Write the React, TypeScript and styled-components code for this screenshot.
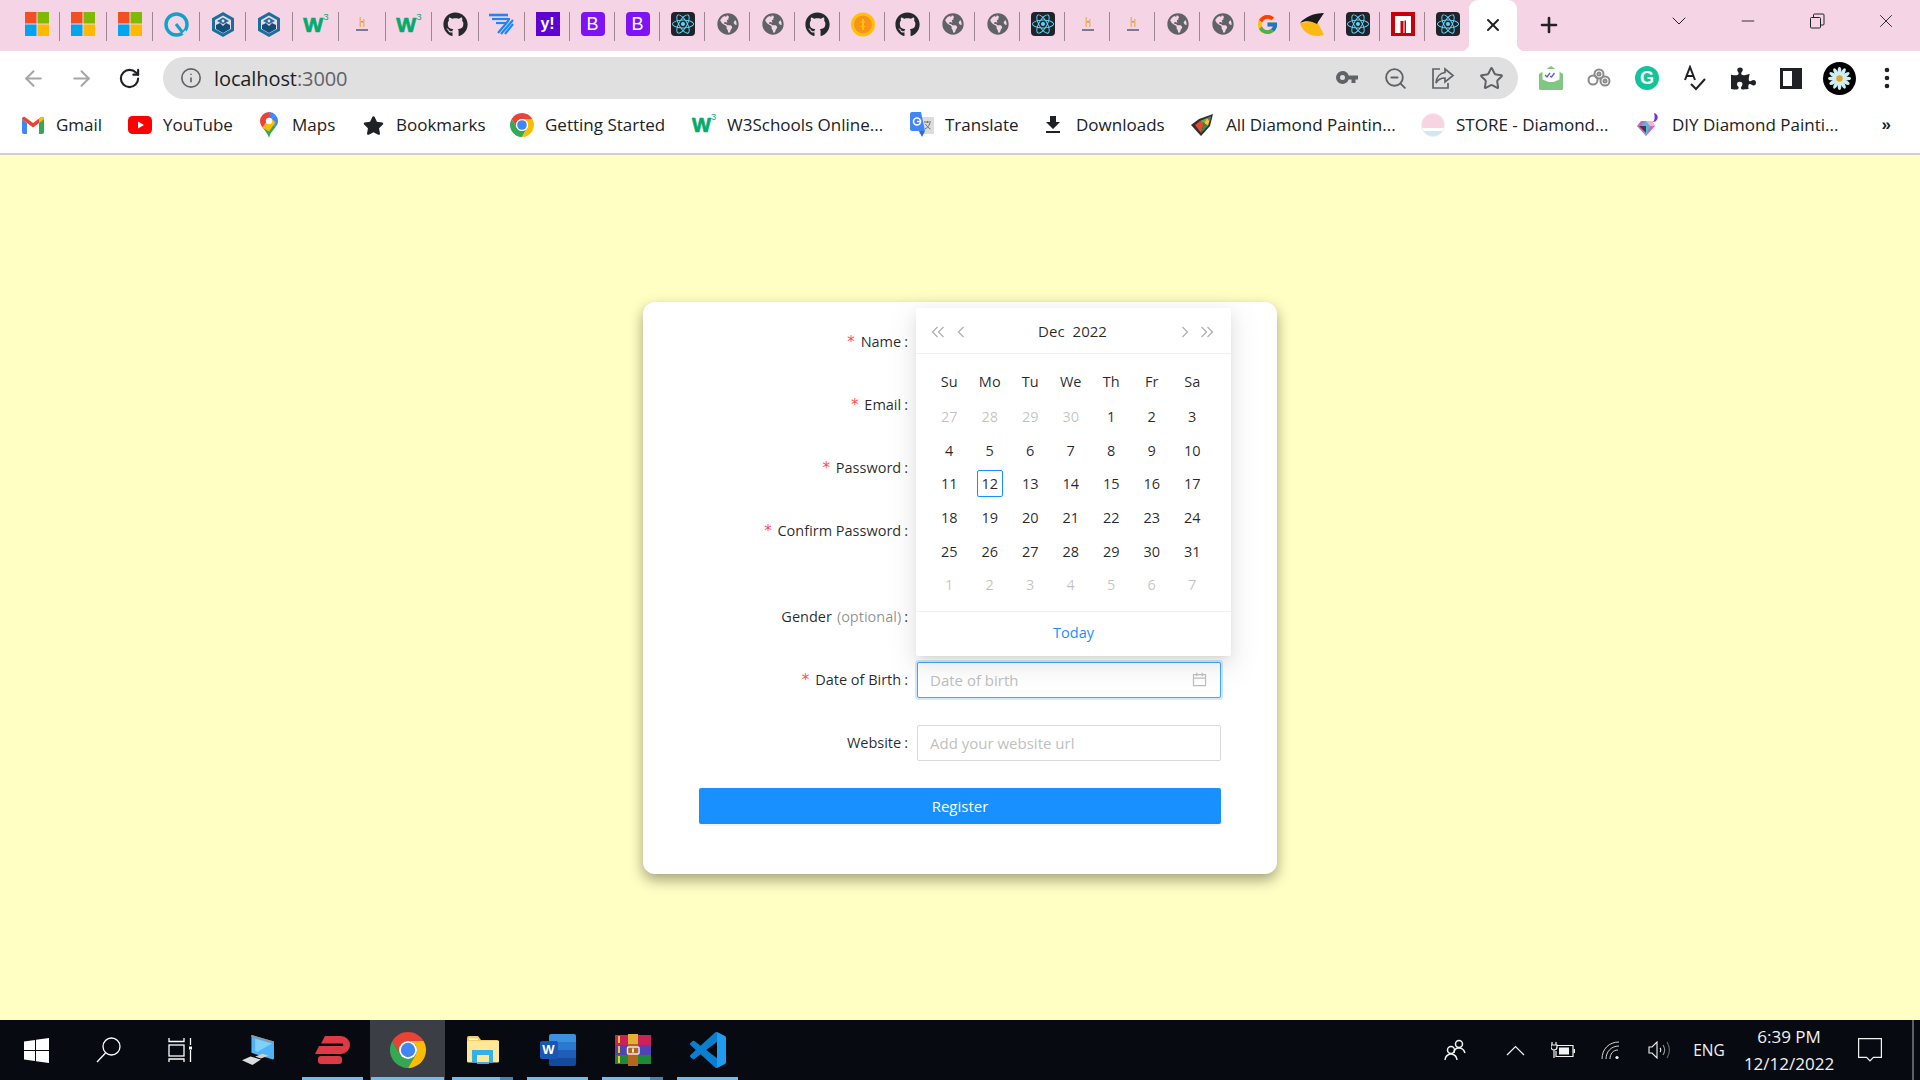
import styled, { createGlobalStyle } from 'styled-components';
import { ArrowLeft, ArrowRight, RotateCw, Info, Plus, X, Minus, ChevronDown, ZoomOut, Star } from 'lucide-react';
import { FaGithub, FaReact, FaGlobeAmericas, FaStar, FaPuzzlePiece } from 'react-icons/fa';
import { FcGoogle } from 'react-icons/fc';
import { AiOutlineCalendar } from 'react-icons/ai';
import { MdFileDownload } from 'react-icons/md';

const UI_FONT = `"Open Sans", "Noto Sans", "Liberation Sans", sans-serif`;

const GlobalStyle = createGlobalStyle`
  html, body { margin: 0; padding: 0; }
  * { box-sizing: border-box; }
  body { font-family: ${UI_FONT}; }
`;

const Screen = styled.div`
  width: 1920px;
  height: 1080px;
  display: flex;
  flex-direction: column;
  overflow: hidden;
  background: #fffec3;
`;

/* ---------- tab strip ---------- */
const TabStrip = styled.div`
  height: 51px;
  flex: none;
  display: flex;
  padding-left: 13.5px;
  background: #f5d5e5;
`;
const Tab = styled.div<{ $wide?: boolean }>`
  width: ${(p) => (p.$wide ? '46.5px' : '45px')};
  height: 51px;
  flex: none;
  display: flex;
  align-items: center;
  justify-content: center;
  position: relative;
  padding-bottom: 3px;
  &::after {
    content: '';
    position: absolute;
    right: 0;
    top: 12px;
    bottom: 10px;
    width: 1px;
    background: #9c8791;
  }
`;
const ActiveTab = styled.div`
  width: 48px;
  height: 51px;
  margin-left: -1px;
  flex: none;
  display: flex;
  align-items: center;
  justify-content: center;
  padding-bottom: 2px;
  position: relative;
  background: #fff;
  border-radius: 9px 9px 0 0;
  color: #222;
  &::before,
  &::after {
    content: '';
    position: absolute;
    bottom: 0;
    width: 8px;
    height: 8px;
  }
  &::before {
    left: -8px;
    background: radial-gradient(circle at 0 0, #f5d5e5 8px, #fff 8.5px);
  }
  &::after {
    right: -8px;
    background: radial-gradient(circle at 100% 0, #f5d5e5 8px, #fff 8.5px);
  }
`;
const NewTab = styled.div`
  width: 48px;
  margin-left: 8px;
  display: flex;
  align-items: center;
  justify-content: center;
  padding-bottom: 1px;
  color: #222;
`;
const WindowControls = styled.div`
  margin-left: auto;
  display: flex;
`;
const WindowButton = styled.div`
  width: 68.75px;
  height: 42px;
  display: flex;
  align-items: center;
  justify-content: center;
  color: #222;
`;
const RestoreIcon = () => (
  <svg width="16" height="16" viewBox="0 0 16 16" fill="none" stroke="#222" strokeWidth="1">
    <rect x="1.5" y="4.5" width="10" height="10.5" rx="1" />
    <path d="M4.5 4.5V2a1 1 0 0 1 1-1h8.5a1 1 0 0 1 1 1v9a1 1 0 0 1-1 1h-2.5" />
  </svg>
);

/* favicons */
const MsIcon = () => (
  <svg width="24" height="24" viewBox="0 0 24 24">
    <rect width="11.5" height="11.5" fill="#f25022" />
    <rect x="12.5" width="11.5" height="11.5" fill="#7fba00" />
    <rect y="12.5" width="11.5" height="11.5" fill="#00a4ef" />
    <rect x="12.5" y="12.5" width="11.5" height="11.5" fill="#ffb900" />
  </svg>
);
const QIcon = () => (
  <svg width="25" height="25" viewBox="0 0 25 25" fill="none">
    <circle cx="12.5" cy="12.5" r="10.5" stroke="#12a1c9" strokeWidth="3.4" />
    <path d="M12 12l7 9" stroke="#12a1c9" strokeWidth="3" />
    <path d="M19 22l3-3" stroke="#f5d5e5" strokeWidth="2" />
  </svg>
);
const HexIcon = () => (
  <svg width="22" height="25" viewBox="0 0 22 25">
    <path d="M11 0l11 6.2v12.6L11 25 0 18.8V6.2z" fill="#1a6f9c" />
    <path d="M11 3.5l8 4.5v9l-8 4.5L3 17V8z" fill="#f5d5e5" />
    <path d="M11 5.5l6 3.4-6 3.4-6-3.4z" fill="#1a6f9c" />
    <path d="M4 13l4-2 3 3 3-3 4 2v4l-7 4-7-4z" fill="#124f78" />
    <circle cx="11" cy="9" r="1.4" fill="#f5d5e5" />
  </svg>
);
const W3Glyph = styled.span<{ $size: number }>`
  font-family: "Liberation Sans", sans-serif;
  font-size: ${(p) => p.$size}px;
  font-weight: 700;
  line-height: 1;
  color: #04aa6d;
  position: relative;
  margin-right: 5px;
  -webkit-text-stroke: 0.7px #04aa6d;
  & > sup {
    position: absolute;
    left: 100%;
    top: -2px;
    font-size: ${(p) => p.$size * 0.46}px;
    font-weight: 400;
    line-height: 1;
    -webkit-text-stroke: 0;
  }
`;
const W3Icon = ({ size = 21 }: { size?: number }) => (
  <W3Glyph $size={size}>W<sup>3</sup></W3Glyph>
);
const TowerIcon = () => (
  <svg width="12" height="15" viewBox="0 0 12 15">
    <rect x="3.5" y="0" width="1.500" height="10" fill="#edb65c" />
    <rect x="7" y="2" width="1.500" height="8" fill="#edb65c" />
    <rect x="5" y="4" width="2" height="1.500" fill="#a893a8" />
    <rect x="0" y="12" width="12" height="2" fill="#77799f" />
  </svg>
);
const WingIcon = () => (
  <svg width="25" height="22" viewBox="0 0 25 22" fill="none" stroke="#1e88f0" strokeWidth="2.2">
    <path d="M0 2h19" strokeWidth="2.6" />
    <path d="M3 6h18" />
    <path d="M7 10h11" />
    <path d="M24 7L12 21" />
    <path d="M20 7L9 20" />
    <path d="M24 11l-8 10" />
  </svg>
);
const SquareGlyph = styled.div<{ $bg: string; $radius: number }>`
  width: 24px;
  height: 24px;
  display: flex;
  align-items: center;
  justify-content: center;
  background: ${(p) => p.$bg};
  border-radius: ${(p) => p.$radius}px;
  color: #fff;
  font-family: "Liberation Sans", sans-serif;
`;
const YahooText = styled.span`
  font-size: 16px;
  font-weight: 700;
`;
const BootText = styled.span`
  font-size: 18px;
  font-weight: 500;
`;
const CoinIcon = () => (
  <svg width="24" height="25" viewBox="0 0 24 25">
    <circle cx="12" cy="12.5" r="12" fill="#ffc107" />
    <circle cx="12" cy="12.5" r="9" fill="#f7931a" />
    <path d="M11 7h2v11h-2z" fill="#ffc107" />
    <path d="M9.5 10h5M9.5 14.5h5" stroke="#ffc107" strokeWidth="1.2" />
  </svg>
);
const BannerIcon = () => (
  <svg width="25" height="25" viewBox="0 0 25 25">
    <path d="M0 11L17 9l7 14c-10 3-21-1-24-12z" fill="#fdb913" />
    <path d="M0 11C5 5 14 1 24 1l-6 9-1 2C12 9 6 8 0 11z" fill="#1b1b1b" />
  </svg>
);
const NIcon = () => (
  <svg width="24" height="24" viewBox="0 0 24 24">
    <rect width="24" height="24" fill="#c8000a" />
    <path d="M4 4h16v17h-5V8.500h-1.500V21H4z" fill="#fff" />
    <rect x="9.500" y="9" width="3" height="12" fill="#c8000a" />
  </svg>
);

const renderFavicon = (kind: string) => {
  switch (kind) {
    case 'ms': return <MsIcon />;
    case 'q': return <QIcon />;
    case 'hex': return <HexIcon />;
    case 'w3': return <W3Icon />;
    case 'tower': return <TowerIcon />;
    case 'github': return <FaGithub size={25} color="#24292e" />;
    case 'wing': return <WingIcon />;
    case 'yahoo': return <SquareGlyph $bg="#5f01d1" $radius={0}><YahooText>y!</YahooText></SquareGlyph>;
    case 'boot': return <SquareGlyph $bg="#7f13f5" $radius={4}><BootText>B</BootText></SquareGlyph>;
    case 'react': return <SquareGlyph $bg="#20232a" $radius={4}><FaReact size={22} color="#61dafb" /></SquareGlyph>;
    case 'globe': return <FaGlobeAmericas size={22} color="#5f6368" />;
    case 'coin': return <CoinIcon />;
    case 'google': return <FcGoogle size={23} />;
    case 'banner': return <BannerIcon />;
    default: return <NIcon />;
  }
};

const TAB_KINDS = [
  'ms', 'ms', 'ms', 'q', 'hex', 'hex', 'w3', 'tower', 'w3', 'github', 'wing', 'yahoo', 'boot', 'boot', 'react', 'globe',
  'globe', 'github', 'coin', 'github', 'globe', 'globe', 'react', 'tower', 'tower', 'globe', 'globe', 'google', 'banner',
  'react', 'n', 'react',
];

/* ---------- toolbar ---------- */
const Toolbar = styled.div`
  height: 48px;
  flex: none;
  display: flex;
  align-items: flex-end;
  padding: 0 9px;
  background: #fff;
`;
const ToolButton = styled.div<{ $color?: string }>`
  width: 48px;
  height: 42px;
  flex: none;
  display: flex;
  align-items: center;
  justify-content: center;
  color: ${(p) => p.$color || '#5f6368'};
`;
const Omnibox = styled.div`
  flex: 1;
  height: 42px;
  margin: 0 9px 0 10px;
  display: flex;
  align-items: center;
  padding: 0 3px 0 17px;
  background: #e0e0e0;
  border-radius: 21px;
`;
const Url = styled.div`
  margin-left: 12px;
  font-size: 20px;
  color: #1f1f1f;
  letter-spacing: -0.1px;
  & > span {
    color: #5f6368;
  }
`;
const OmniSpacer = styled.div`
  flex: 1;
`;
const KeyIcon = () => (
  <svg width="22" height="14" viewBox="0 0 22 14" fill="#5f6368">
    <path d="M6.500 0a6.500 6.500 0 0 1 6.200 4.500H22v4h-2.500V12h-4V8.500h-2.800A6.500 6.500 0 1 1 6.500 0zm0 4a2.500 2.500 0 1 0 0 5 2.500 2.500 0 0 0 0-5z" />
  </svg>
);
const ShareIcon = () => (
  <svg width="24" height="24" viewBox="0 0 24 24" fill="none" stroke="#5f6368" strokeWidth="1.7">
    <path d="M9 3H2v19h15v-5" />
    <path d="M14 3l8 6.500-8 6.500v-4c-4 0-7 1.500-9 5 .5-6 4-10 9-10.500z" />
  </svg>
);
const MailExtIcon = () => (
  <svg width="24" height="24" viewBox="0 0 24 24">
    <path d="M0 8l12-8 12 8v14a2 2 0 0 1-2 2H2a2 2 0 0 1-2-2z" fill="#81c784" />
    <rect x="3.500" y="3" width="17" height="13" fill="#fff" />
    <path d="M6 9l2 2 3-4M11 10l1.500 1 3-4" stroke="#5c5fd6" strokeWidth="1.300" fill="none" />
    <path d="M0 12l12 5 12-5v10a2 2 0 0 1-2 2H2a2 2 0 0 1-2-2z" fill="#81c784" />
  </svg>
);
const RingsIcon = () => (
  <svg width="24" height="20" viewBox="0 0 24 20" fill="none" stroke="#8a8a8a" strokeWidth="2">
    <circle cx="6" cy="12" r="4.500" />
    <circle cx="12" cy="6" r="4.500" />
    <circle cx="18" cy="13" r="4.500" />
    <circle cx="18" cy="13" r="1.500" />
    <circle cx="12" cy="6" r="1.500" />
  </svg>
);
const GrammarlyBadge = styled.div`
  width: 24px;
  height: 24px;
  display: flex;
  align-items: center;
  justify-content: center;
  border-radius: 50%;
  background: #15c39a;
  color: #fff;
  font-family: "Liberation Sans", sans-serif;
  font-size: 18px;
  font-weight: 700;
`;
const SpellIcon = () => (
  <svg width="24" height="26" viewBox="0 0 24 26" fill="none" stroke="#202124" strokeWidth="2">
    <path d="M2 15L7 2l5 13M4 11h6" />
    <path d="M8 19l5 5 9-10" />
  </svg>
);
const SidePanelIcon = () => (
  <svg width="22" height="21" viewBox="0 0 22 21">
    <path d="M0 0h22v21H0zM3 3v15h9V3z" fill="#202124" fillRule="evenodd" />
  </svg>
);
const AvatarIcon = () => (
  <svg width="33" height="33" viewBox="0 0 33 33">
    <circle cx="16.500" cy="16.500" r="16.500" fill="#000" />
    {[0, 30, 60, 90, 120, 150, 180, 210, 240, 270, 300, 330].map((a) => (
      <ellipse key={a} cx="16.500" cy="10" rx="1.900" ry="5" fill="#cfeef0" transform={`rotate(${a} 16.500 16.500)`} />
    ))}
    <circle cx="16.500" cy="16.500" r="3.200" fill="#f0a020" />
  </svg>
);
const DotsIcon = () => (
  <svg width="6" height="22" viewBox="0 0 6 22" fill="#202124">
    <circle cx="3" cy="3" r="2.300" />
    <circle cx="3" cy="11" r="2.300" />
    <circle cx="3" cy="19" r="2.300" />
  </svg>
);

/* ---------- bookmarks ---------- */
const BookmarkBar = styled.div`
  height: 56px;
  flex: none;
  display: flex;
  align-items: center;
  padding: 0 0 2px 21px;
  background: #fff;
  border-bottom: 2px solid #cfcfcf;
`;
const Bookmark = styled.div<{ $w: number; $gap: number }>`
  flex: none;
  display: flex;
  align-items: center;
  width: ${(p) => p.$w}px;
  margin-right: ${(p) => p.$gap}px;
`;
const BookmarkIconBox = styled.div`
  width: 24px;
  height: 26px;
  flex: none;
  display: flex;
  align-items: center;
  justify-content: center;
`;
const BookmarkLabel = styled.span`
  margin-left: 11px;
  font-size: 17px;
  line-height: 20px;
  color: #202124;
  white-space: nowrap;
`;
const MoreMarks = styled.div`
  margin-left: auto;
  width: 68px;
  padding-right: 29px;
  text-align: right;
  font-family: "Liberation Sans", sans-serif;
  font-weight: 700;
  font-size: 17px;
  color: #202124;
`;
const GmailIcon = () => (
  <svg width="22" height="18" viewBox="0 0 22 18">
    <path d="M0 3v13a2 2 0 0 0 2 2h3V7z" fill="#4285f4" />
    <path d="M22 3v13a2 2 0 0 1-2 2h-3V7z" fill="#34a853" />
    <path d="M0 3l5 4 6 4.500L17 7l5-4a2 2 0 0 0-3.500-1.500L11 7 3.500 1.500A2 2 0 0 0 0 3z" fill="#ea4335" />
    <path d="M17 7l5-4a2 2 0 0 0-3.500-1.500L17 3z" fill="#fbbc04" />
  </svg>
);
const YoutubeIcon = () => (
  <svg width="24" height="18" viewBox="0 0 24 18">
    <rect width="24" height="18" rx="4.500" fill="#f00" />
    <path d="M10 5.500l6 3.500-6 3.500z" fill="#fff" />
  </svg>
);
const MapsIcon = () => (
  <svg width="18" height="26" viewBox="0 0 18 26">
    <path d="M9 0a9 9 0 0 0-9 9c0 3 1.500 5 2.500 6.500L9 7z" fill="#ea4335" />
    <path d="M9 0c2.500 0 5 1 6.500 3L9 9z" fill="#4285f4" />
    <path d="M15.500 3A9 9 0 0 1 18 9c0 2.500-1 4-2 5.500L9 9z" fill="#4285f4" />
    <path d="M2.500 15.500L9 9l7 5.500c-2 3-5.500 5.500-7 11.500-1-4-4-7.500-6.500-10.500z" fill="#34a853" />
    <path d="M2.500 15.500L11.500 6.500l4 4-6.500 9z" fill="#fbbc04" />
    <circle cx="9" cy="9" r="3.200" fill="#fff" />
  </svg>
);
const ChromeIcon = ({ size }: { size: number }) => (
  <svg width={size} height={size} viewBox="4 4 40 40">
    <path d="M6.680 14A20 20 0 0 1 41.320 14H24A10 10 0 0 0 15.340 29z" fill="#ea4335" />
    <path d="M6.680 14A20 20 0 0 0 24 44l8.660-15A10 10 0 0 1 15.340 29z" fill="#34a853" />
    <path d="M24 44A20 20 0 0 0 41.320 14H24A10 10 0 0 1 32.660 29z" fill="#fbbc04" />
    <circle cx="24" cy="24" r="10" fill="#fff" />
    <circle cx="24" cy="24" r="8" fill="#4285f4" />
  </svg>
);
const TranslateIcon = () => (
  <svg width="24" height="26" viewBox="0 0 24 26">
    <rect x="9" y="5" width="15" height="17" rx="1" fill="#dcdcdc" />
    <path d="M14 10h7M17.500 9v2M20 11c-1 3-3 5-5 6M15.500 12c1 2 3 4 5 5" stroke="#6d6d6d" strokeWidth="1" fill="none" />
    <path d="M2 0h9l4 19H2a2 2 0 0 1-2-2V2a2 2 0 0 1 2-2z" fill="#4285f4" />
    <path d="M9 19l3 6 3-6z" fill="#3367d6" />
    <circle cx="7" cy="9.500" r="3.500" fill="none" stroke="#fff" strokeWidth="1.600" />
    <path d="M7 9.500h3.500" stroke="#fff" strokeWidth="1.400" />
  </svg>
);
const GemIcon = () => (
  <svg width="24" height="24" viewBox="0 0 24 24">
    <path d="M0 12L8 6l14-5-3 12-9 10z" fill="#2e2e2e" />
    <path d="M4 12l5-4 4 2-3 10z" fill="#e04a32" />
    <path d="M9 8l7-3-3 5z" fill="#5cb746" />
    <path d="M13 10l3-5 3 1-2 7z" fill="#f2c530" />
    <path d="M10 20l3-10 4 3z" fill="#2f8f4a" />
    <path d="M16 5l4-2-1 6z" fill="#6f6f6f" />
  </svg>
);
const StoreBadge = styled.div`
  width: 24px;
  height: 24px;
  border-radius: 50%;
  background: linear-gradient(#f8d3e2 0 62%, #fff 62% 78%, #cfe6f5 78%);
  border: 1px solid #eee;
`;
const DiyIcon = () => (
  <svg width="24" height="24" viewBox="0 0 24 24">
    <path d="M0 13l4-5h11l3 5-9 10z" fill="#c26bbe" />
    <path d="M4 13l5-5 4 5-4 10z" fill="#56b9d6" />
    <path d="M13 13l-4-5h6l3 5z" fill="#f2b8c6" />
    <path d="M2 13h7v7z" fill="#4a3550" />
    <path d="M17 0c4 1 5 5 2 8-1 .8-2 1-3 1 2-2 2-6 1-9z" fill="#6a35c9" />
  </svg>
);

/* ---------- register form ---------- */
const Page = styled.main`
  flex: 1;
  min-height: 0;
  display: flex;
  align-items: center;
  justify-content: center;
  background: #fffec3;
`;
const Card = styled.form`
  width: 634px;
  height: 572px;
  position: relative;
  padding: 22px 56px 0;
  background: #fff;
  border-radius: 12px;
  box-shadow: 0 6px 14px rgba(0, 0, 0, 0.36);
  font-size: 14.5px;
  color: rgba(0, 0, 0, 0.85);
`;
const FormRow = styled.div<{ $extra?: boolean }>`
  display: flex;
  height: 36px;
  margin-bottom: ${(p) => (p.$extra ? '50px' : '27px')};
`;
const Label = styled.label`
  width: 218px;
  flex: none;
  display: flex;
  align-items: center;
  justify-content: flex-end;
  padding-right: 9px;
  white-space: nowrap;
  &::after {
    content: ':';
    margin-left: 3px;
  }
`;
const Required = styled.span`
  margin-right: 5px;
  color: #ff4d4f;
  font-family: "DejaVu Sans Mono", monospace;
  font-size: 15px;
`;
const Muted = styled.span`
  margin-left: 5px;
  color: rgba(0, 0, 0, 0.45);
`;
const InputBox = styled.div<{ $focused?: boolean }>`
  width: 304px;
  height: 36px;
  display: flex;
  align-items: center;
  padding: 0 12px;
  background: #fff;
  border: 1px solid ${(p) => (p.$focused ? '#40a9ff' : '#d9d9d9')};
  border-radius: 2px;
  box-shadow: ${(p) => (p.$focused ? '0 0 0 2px rgba(24, 144, 255, 0.2)' : 'none')};
`;
const TextField = styled.input`
  flex: 1;
  min-width: 0;
  border: none;
  outline: none;
  padding: 0;
  background: transparent;
  font-family: inherit;
  font-size: 15px;
  color: inherit;
  &::placeholder {
    color: #bfbfbf;
    opacity: 1;
  }
`;
const SubmitButton = styled.button`
  width: 522px;
  height: 36px;
  display: block;
  padding: 0;
  border: none;
  border-radius: 2px;
  background: #1890ff;
  box-shadow: 0 2px 0 rgba(0, 0, 0, 0.045);
  color: #fff;
  font-family: inherit;
  font-size: 15px;
`;

/* date picker popup lies over the form */
const Picker = styled.div`
  position: absolute;
  left: 273px;
  top: 6px;
  width: 315px;
  height: 348px;
  display: flex;
  flex-direction: column;
  background: #fff;
  border-radius: 2px;
  box-shadow: 0 3px 6px -4px rgba(0, 0, 0, 0.12), 0 6px 16px 0 rgba(0, 0, 0, 0.08), 0 9px 28px 8px rgba(0, 0, 0, 0.05);
`;
const PickerHeader = styled.div`
  height: 46px;
  flex: none;
  display: flex;
  align-items: center;
  padding: 4px 12px 0 10px;
  border-bottom: 1px solid #f0f0f0;
`;
const NavButton = styled.div<{ $w: number }>`
  width: ${(p) => p.$w}px;
  display: flex;
  justify-content: center;
  color: #b0b0b0;
`;
const MonthTitle = styled.div`
  flex: 1;
  display: flex;
  justify-content: center;
  gap: 8px;
  margin-top: -3px;
  font-size: 15px;
  font-weight: 500;
`;
const PickerBody = styled.div`
  flex: 1;
  padding: 10px 0 0 13px;
`;
const DayGrid = styled.div`
  display: grid;
  grid-template-columns: repeat(7, 40.5px);
  grid-template-rows: 36px repeat(6, 33.7px);
`;
const WeekDay = styled.div`
  display: flex;
  align-items: center;
  justify-content: center;
  font-size: 14.5px;
`;
const DayCell = styled.div<{ $muted?: boolean }>`
  display: flex;
  align-items: center;
  justify-content: center;
  font-size: 14.5px;
  color: ${(p) => (p.$muted ? 'rgba(0, 0, 0, 0.25)' : 'rgba(0, 0, 0, 0.85)')};
`;
const TodayMark = styled.div`
  width: 26px;
  height: 27px;
  display: flex;
  align-items: center;
  justify-content: center;
  border: 1px solid #1890ff;
  border-radius: 2px;
`;
const PickerFooter = styled.div`
  height: 45px;
  flex: none;
  display: flex;
  align-items: center;
  justify-content: center;
  padding-bottom: 2px;
  border-top: 1px solid #f0f0f0;
  color: #1890ff;
  font-size: 14.5px;
`;
const Chevron = ({ double, right }: { double?: boolean; right?: boolean }) => {
  const w = double ? 14 : 9;
  return (
    <svg width={w} height="12" viewBox={`0 0 ${w} 12`} fill="none" stroke="currentColor" strokeWidth="1.300">
      <g transform={right ? `translate(${w} 0) scale(-1 1)` : undefined}>
        <path d="M6.500 1L1.500 6l5 5" />
        {double && <path d="M12.500 1L7.500 6l5 5" />}
      </g>
    </svg>
  );
};

const WEEK = ['Su', 'Mo', 'Tu', 'We', 'Th', 'Fr', 'Sa'];
const LEADING = [27, 28, 29, 30];
const TRAILING = [1, 2, 3, 4, 5, 6, 7];
const DAYS = Array.from({ length: 31 }, (_, i) => i + 1);

/* ---------- taskbar ---------- */
const Taskbar = styled.footer`
  height: 60px;
  flex: none;
  display: flex;
  align-items: stretch;
  background: #070b11;
  color: #f2f2f2;
`;
const SystemButton = styled.div<{ $pinned?: boolean }>`
  width: ${(p) => (p.$pinned ? '75px' : '72px')};
  margin-left: ${(p) => (p.$pinned ? '4px' : '0')};
  display: flex;
  align-items: center;
  justify-content: center;
`;
const AppButton = styled.div<{ $active?: boolean; $stacked?: boolean }>`
  width: 75px;
  display: flex;
  align-items: center;
  justify-content: center;
  position: relative;
  padding-bottom: 1px;
  background: ${(p) => (p.$active ? '#3b3e44' : 'transparent')};
  &::after {
    content: '';
    position: absolute;
    left: ${(p) => (p.$active ? '1px' : '7px')};
    right: ${(p) => (p.$active ? '1px' : '7px')};
    bottom: 0;
    height: 3px;
    background: ${(p) => (p.$stacked
      ? 'linear-gradient(to right, #76b9ed 0 48px, #4a83ad 48px)'
      : '#76b9ed')};
  }
`;
const Tray = styled.div`
  margin-left: auto;
  display: flex;
  align-items: center;
`;
const TrayItem = styled.div<{ $w: number; $gap?: number }>`
  width: ${(p) => p.$w}px;
  margin-right: ${(p) => p.$gap || 0}px;
  display: flex;
  align-items: center;
  justify-content: center;
`;
const LangText = styled.span`
  font-size: 15.5px;
`;
const Clock = styled.div`
  width: 108px;
  display: flex;
  flex-direction: column;
  align-items: center;
  gap: 5px;
  font-size: 17px;
  line-height: 22px;
  white-space: nowrap;
`;
const DesktopEdge = styled.div`
  width: 2px;
  height: 60px;
  margin: 0 6px 0 15px;
  background: #5b5e63;
`;
const WindowsLogo = () => (
  <svg width="25" height="25" viewBox="0 0 25 25" fill="#fff">
    <path d="M0 3.500L11 2v10H0zM12 1.800L25 0v12H12zM0 13h11v10L0 21.500zM12 13h13v12l-13-1.800z" />
  </svg>
);
const SearchIcon = () => (
  <svg width="25" height="26" viewBox="0 0 25 26" fill="none" stroke="#fff" strokeWidth="1.300">
    <circle cx="15.500" cy="9.500" r="8.500" />
    <path d="M9.500 16L1 25" />
  </svg>
);
const TaskViewIcon = () => (
  <svg width="24" height="24" viewBox="0 0 24 24" fill="none" stroke="#fff" strokeWidth="1.300">
    <path d="M1 0v3.500h15V0" />
    <rect x="1" y="7" width="15" height="11" />
    <path d="M1 24v-3h15v3" />
    <path d="M22.500 0v7M22.500 12v12" />
    <rect x="21" y="8.500" width="3" height="3" fill="#fff" stroke="none" />
  </svg>
);
const ComputerIcon = () => (
  <svg width="32" height="31" viewBox="0 0 34 33">
    <path d="M10 0l24 7v18l-1 1L10 19z" fill="#4fb3f5" />
    <path d="M10 0l24 7v2L10 2z" fill="#8a9aa5" />
    <path d="M14 4l18 5-16 9-2-1z" fill="#7fd0fa" />
    <path d="M14 23l8-3 6 2-8 3z" fill="#d0d0d0" />
    <path d="M0 27l9-4 11 3-9 6z" fill="#dcdcdc" />
  </svg>
);
const ExpressIcon = () => (
  <svg width="36" height="28" viewBox="0 0 36 28" fill="#dc3a44">
    <path d="M10 0h16a9 9 0 0 1 9 9 9 9 0 0 1-9 9H0l4-8h23a1.200 1.200 0 0 0 0-2.500H6z" />
    <rect x="3" y="20" width="24" height="8" rx="3" />
  </svg>
);
const ExplorerIcon = () => (
  <svg width="32" height="28" viewBox="0 0 32 28">
    <path d="M0 2a2 2 0 0 1 2-2h9l3 4h16a2 2 0 0 1 2 2v18a2 2 0 0 1-2 2H2a2 2 0 0 1-2-2z" fill="#f3cf6c" />
    <path d="M0 5h32v20a1.500 1.500 0 0 1-1.500 1.500h-29A1.500 1.500 0 0 1 0 25z" fill="#ffe79a" />
    <rect x="2" y="2.500" width="9" height="1.500" fill="#fff" />
    <path d="M5 26.500V14h21v12.500h-4V19H10v7.500z" fill="#31b0ec" />
    <rect x="10" y="26" width="12" height="2" fill="#31b0ec" />
  </svg>
);
const WordBase = styled.div`
  width: 36px;
  height: 32px;
  position: relative;
`;
const WordPages = styled.div`
  position: absolute;
  right: 0;
  top: 0;
  width: 27px;
  height: 32px;
  border-radius: 2px;
  background: linear-gradient(#3d8fe0 0 25%, #2a78d0 25% 50%, #1c5eb8 50% 75%, #144a9c 75%);
`;
const WordBadge = styled.div`
  position: absolute;
  left: 0;
  top: 7px;
  width: 18px;
  height: 18px;
  display: flex;
  align-items: center;
  justify-content: center;
  border-radius: 2px;
  background: #1a56b5;
  color: #fff;
  font-family: "Liberation Sans", sans-serif;
  font-size: 13px;
  font-weight: 700;
`;
const RarIcon = () => (
  <svg width="36" height="32" viewBox="0 0 36 32">
    <rect y="1" width="36" height="10" fill="#c9235a" />
    <rect y="11" width="36" height="10" fill="#5044b4" />
    <rect y="21" width="36" height="9" fill="#1d8a3a" />
    <rect x="3" y="2" width="2" height="7" fill="#f7c52e" />
    <rect x="3" y="12" width="2" height="7" fill="#f7c52e" />
    <rect x="3" y="22" width="2" height="7" fill="#f7c52e" />
    <rect x="13" y="0" width="10" height="10" fill="#e5b030" />
    <rect x="13" y="10" width="10" height="22" fill="#b4661e" />
    <rect x="12.500" y="13" width="11.500" height="7" rx="1" fill="none" stroke="#e8e8e8" strokeWidth="1.500" />
    <rect x="17" y="14.500" width="2" height="4" fill="#e8e8e8" />
  </svg>
);
const VscodeIcon = () => (
  <svg width="36" height="36" viewBox="0 0 24 24">
    <path fill="#0a7fd0" d="M23.150 2.587L18.210.21a1.494 1.494 0 0 0-1.705.29l-9.460 8.630-4.120-3.128a.999.999 0 0 0-1.276.057L.327 7.261A1 1 0 0 0 .326 8.740L3.899 12 .326 15.260a1 1 0 0 0 .001 1.479L1.650 17.940a.999.999 0 0 0 1.276.057l4.120-3.128 9.460 8.630a1.492 1.492 0 0 0 1.704.29l4.942-2.377A1.500 1.500 0 0 0 24 20.060V3.939a1.500 1.500 0 0 0-.850-1.352zm-5.146 14.861L10.826 12l7.178-5.448v10.896z" />
    <path fill="#1f9cf0" d="M18.004 0.100a1.500 1.500 0 0 1 .206.110l4.940 2.377A1.500 1.500 0 0 1 24 3.939V20.060a1.500 1.500 0 0 1-.850 1.352l-4.942 2.377a1.500 1.500 0 0 1-.204.080z" />
  </svg>
);
const PeopleIcon = () => (
  <svg width="22" height="22" viewBox="0 0 22 22" fill="none" stroke="#f2f2f2" strokeWidth="1.500">
    <circle cx="15" cy="5" r="3.500" />
    <path d="M10 14c0-3 2-5 5-5s5 2 6 5" />
    <circle cx="7" cy="11" r="3.500" />
    <path d="M1 21c0-3 2.500-6 6-6s6 3 6 6" />
  </svg>
);
const CaretIcon = () => (
  <svg width="19" height="11" viewBox="0 0 19 11" fill="none" stroke="#f2f2f2" strokeWidth="1.200">
    <path d="M1 10l8.500-8.500L18 10" />
  </svg>
);
const BatteryIcon = () => (
  <svg width="24" height="16" viewBox="0 0 24 16" fill="none" stroke="#f2f2f2" strokeWidth="1.200">
    <path d="M6 3.500h16v11H5V9" />
    <rect x="8" y="5.500" width="10" height="7" fill="#f2f2f2" stroke="none" />
    <rect x="22.500" y="7" width="1.500" height="4" fill="#f2f2f2" stroke="none" />
    <path d="M1 0v3M5 0v3M0 3h6v2a3 3 0 0 1-6 0zM3 8v8" />
  </svg>
);
const WifiIcon = () => (
  <svg width="20" height="19" viewBox="0 0 20 19" fill="none" stroke="#d6d6d6" strokeWidth="1">
    <path d="M1 18C1 8 8 1 18 1" />
    <path d="M5 18c0-7 5-13 13-13" />
    <path d="M9 18c0-5 3-9 8-9" />
    <circle cx="16" cy="16.500" r="1.600" fill="#f2f2f2" stroke="none" />
  </svg>
);
const VolumeIcon = () => (
  <svg width="23" height="18" viewBox="0 0 23 18" fill="none" stroke="#f2f2f2" strokeWidth="1.100">
    <path d="M1 6h3l5-5v16l-5-5H1z" />
    <path d="M12 7c1 1 1 3 0 4" />
    <path d="M15 4c2 3 2 7 0 10" stroke="#9a9a9a" />
    <path d="M19 1c3 5 3 11 0 16" stroke="#6a6a6a" />
  </svg>
);
const NotifyIcon = () => (
  <svg width="24" height="24" viewBox="0 0 24 24" fill="none" stroke="#f2f2f2" strokeWidth="1.200">
    <path d="M.6.6h22.800v18.800h-8L12 23l-3.400-3.600H.6z" />
  </svg>
);

const App = () => {
  return (
    <Screen>
      <GlobalStyle />

      <TabStrip>
        {TAB_KINDS.map((kind, i) => (
          <Tab key={i} $wide={i < 11}>{renderFavicon(kind)}</Tab>
        ))}
        <ActiveTab><X size={20} strokeWidth={2.4} /></ActiveTab>
        <NewTab><Plus size={24} strokeWidth={2.6} /></NewTab>
        <WindowControls>
          <WindowButton><ChevronDown size={24} strokeWidth={1} /></WindowButton>
          <WindowButton><Minus size={20} strokeWidth={1.100} /></WindowButton>
          <WindowButton><RestoreIcon /></WindowButton>
          <WindowButton><X size={22} strokeWidth={1} /></WindowButton>
        </WindowControls>
      </TabStrip>

      <Toolbar>
        <ToolButton $color="#a6a6a6"><ArrowLeft size={25} strokeWidth={1.900} /></ToolButton>
        <ToolButton $color="#a6a6a6"><ArrowRight size={25} strokeWidth={1.900} /></ToolButton>
        <ToolButton $color="#202124"><RotateCw size={23} strokeWidth={2.200} /></ToolButton>
        <Omnibox>
          <Info size={22} strokeWidth={1.800} color="#5f6368" />
          <Url>localhost<span>:3000</span></Url>
          <OmniSpacer />
          <ToolButton><KeyIcon /></ToolButton>
          <ToolButton><ZoomOut size={25} strokeWidth={1.800} /></ToolButton>
          <ToolButton><ShareIcon /></ToolButton>
          <ToolButton><Star size={25} strokeWidth={1.900} /></ToolButton>
        </Omnibox>
        <ToolButton><MailExtIcon /></ToolButton>
        <ToolButton><RingsIcon /></ToolButton>
        <ToolButton><GrammarlyBadge>G</GrammarlyBadge></ToolButton>
        <ToolButton><SpellIcon /></ToolButton>
        <ToolButton $color="#202124"><FaPuzzlePiece size={25} /></ToolButton>
        <ToolButton><SidePanelIcon /></ToolButton>
        <ToolButton><AvatarIcon /></ToolButton>
        <ToolButton><DotsIcon /></ToolButton>
      </Toolbar>

      <BookmarkBar>
        <Bookmark $w={82} $gap={25}><BookmarkIconBox><GmailIcon /></BookmarkIconBox><BookmarkLabel>Gmail</BookmarkLabel></Bookmark>
        <Bookmark $w={103} $gap={26}><BookmarkIconBox><YoutubeIcon /></BookmarkIconBox><BookmarkLabel>YouTube</BookmarkLabel></Bookmark>
        <Bookmark $w={78} $gap={26}><BookmarkIconBox><MapsIcon /></BookmarkIconBox><BookmarkLabel>Maps</BookmarkLabel></Bookmark>
        <Bookmark $w={124} $gap={25}><BookmarkIconBox><FaStar size={21} color="#202124" /></BookmarkIconBox><BookmarkLabel>Bookmarks</BookmarkLabel></Bookmark>
        <Bookmark $w={156} $gap={26}><BookmarkIconBox><ChromeIcon size={24} /></BookmarkIconBox><BookmarkLabel>Getting Started</BookmarkLabel></Bookmark>
        <Bookmark $w={193} $gap={25}><BookmarkIconBox><W3Icon size={20} /></BookmarkIconBox><BookmarkLabel>W3Schools Online...</BookmarkLabel></Bookmark>
        <Bookmark $w={106} $gap={25}><BookmarkIconBox><TranslateIcon /></BookmarkIconBox><BookmarkLabel>Translate</BookmarkLabel></Bookmark>
        <Bookmark $w={125} $gap={25}><BookmarkIconBox><MdFileDownload size={28} color="#202124" /></BookmarkIconBox><BookmarkLabel>Downloads</BookmarkLabel></Bookmark>
        <Bookmark $w={206} $gap={24}><BookmarkIconBox><GemIcon /></BookmarkIconBox><BookmarkLabel>All Diamond Paintin...</BookmarkLabel></Bookmark>
        <Bookmark $w={192} $gap={24}><BookmarkIconBox><StoreBadge /></BookmarkIconBox><BookmarkLabel>STORE - Diamond...</BookmarkLabel></Bookmark>
        <Bookmark $w={203} $gap={0}><BookmarkIconBox><DiyIcon /></BookmarkIconBox><BookmarkLabel>DIY Diamond Painti...</BookmarkLabel></Bookmark>
        <MoreMarks>»</MoreMarks>
      </BookmarkBar>

      <Page>
        <Card>
          <FormRow>
            <Label><Required>*</Required>Name</Label>
            <InputBox><TextField /></InputBox>
          </FormRow>
          <FormRow>
            <Label><Required>*</Required>Email</Label>
            <InputBox><TextField /></InputBox>
          </FormRow>
          <FormRow>
            <Label><Required>*</Required>Password</Label>
            <InputBox><TextField type="password" /></InputBox>
          </FormRow>
          <FormRow $extra>
            <Label><Required>*</Required>Confirm Password</Label>
            <InputBox><TextField type="password" /></InputBox>
          </FormRow>
          <FormRow>
            <Label>Gender<Muted>(optional)</Muted></Label>
            <InputBox><TextField /></InputBox>
          </FormRow>
          <FormRow>
            <Label><Required>*</Required>Date of Birth</Label>
            <InputBox $focused>
              <TextField placeholder="Date of birth" />
              <AiOutlineCalendar size={17} color="#bfbfbf" />
            </InputBox>
          </FormRow>
          <FormRow>
            <Label>Website</Label>
            <InputBox><TextField placeholder="Add your website url" /></InputBox>
          </FormRow>
          <SubmitButton type="button">Register</SubmitButton>

          <Picker>
            <PickerHeader>
              <NavButton $w={24}><Chevron double /></NavButton>
              <NavButton $w={22}><Chevron /></NavButton>
              <MonthTitle><span>Dec</span><span>2022</span></MonthTitle>
              <NavButton $w={22}><Chevron right /></NavButton>
              <NavButton $w={24}><Chevron double right /></NavButton>
            </PickerHeader>
            <PickerBody>
              <DayGrid>
                {WEEK.map((d) => <WeekDay key={d}>{d}</WeekDay>)}
                {LEADING.map((d) => <DayCell key={`p${d}`} $muted>{d}</DayCell>)}
                {DAYS.map((d) => (
                  <DayCell key={d}>{d === 12 ? <TodayMark>{d}</TodayMark> : d}</DayCell>
                ))}
                {TRAILING.map((d) => <DayCell key={`n${d}`} $muted>{d}</DayCell>)}
              </DayGrid>
            </PickerBody>
            <PickerFooter>Today</PickerFooter>
          </Picker>
        </Card>
      </Page>

      <Taskbar>
        <SystemButton><WindowsLogo /></SystemButton>
        <SystemButton><SearchIcon /></SystemButton>
        <SystemButton><TaskViewIcon /></SystemButton>
        <SystemButton $pinned><ComputerIcon /></SystemButton>
        <AppButton><ExpressIcon /></AppButton>
        <AppButton $active><ChromeIcon size={36} /></AppButton>
        <AppButton $stacked><ExplorerIcon /></AppButton>
        <AppButton><WordBase><WordPages /><WordBadge>W</WordBadge></WordBase></AppButton>
        <AppButton $stacked><RarIcon /></AppButton>
        <AppButton><VscodeIcon /></AppButton>
        <Tray>
          <TrayItem $w={50} $gap={11}><PeopleIcon /></TrayItem>
          <TrayItem $w={48}><CaretIcon /></TrayItem>
          <TrayItem $w={48}><BatteryIcon /></TrayItem>
          <TrayItem $w={48}><WifiIcon /></TrayItem>
          <TrayItem $w={48}><VolumeIcon /></TrayItem>
          <TrayItem $w={52}><LangText>ENG</LangText></TrayItem>
          <Clock><span>6:39 PM</span><span>12/12/2022</span></Clock>
          <TrayItem $w={54}><NotifyIcon /></TrayItem>
          <DesktopEdge />
        </Tray>
      </Taskbar>
    </Screen>
  );
};

export default App;
